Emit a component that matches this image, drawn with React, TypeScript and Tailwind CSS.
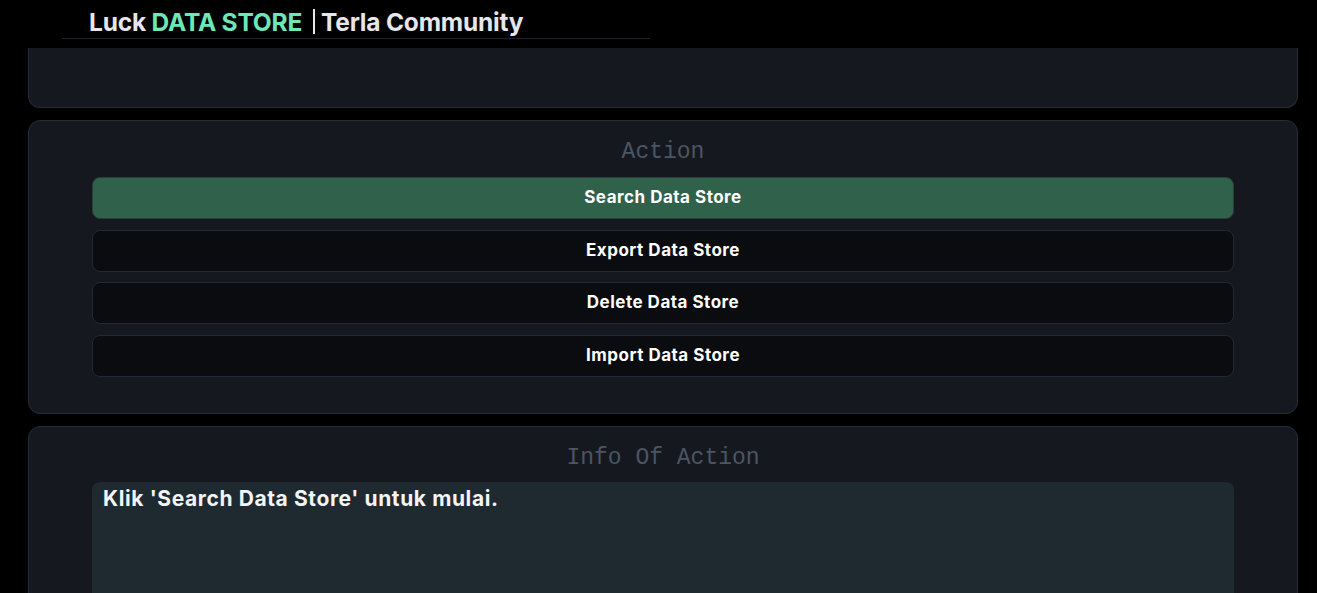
import { useState } from 'react'

const actions = [
  'Search Data Store',
  'Export Data Store',
  'Delete Data Store',
  'Import Data Store',
]

function Panel({ children, className = '' }: { children?: React.ReactNode; className?: string }) {
  return (
    <section className={`rounded-xl border border-[#272b37] bg-[#161820] ${className}`}>
      {children}
    </section>
  )
}

export default function App() {
  const [active, setActive] = useState(0)
  const [info, setInfo] = useState("Klik 'Search Data Store' untuk mulai.")

  return (
    <div className="relative h-screen overflow-hidden bg-black font-['Inter',sans-serif] text-white">
      {/* header bar */}
      <header className="fixed inset-x-0 top-0 z-10 h-12 bg-black">
        <div className="ml-[62px] w-[588px] border-b border-[#1e2130] pl-[27px] pt-[6px] pb-[1px]">
          <h1 className="text-[24.5px] font-bold leading-[30px] tracking-[-0.2px] text-[#e5e7eb]">
            Luck <span className="text-[#6ee7b7]">DATA STORE</span>
            <span className="ml-[11px] mr-[6px] inline-block h-[25px] w-[2px] translate-y-[3px] bg-[#e5e7eb]" />
            Terla Community
          </h1>
        </div>
      </header>

      <main className="ml-7 mr-[19px] flex flex-col gap-3">
        <Panel className="h-[108px] rounded-t-none border-t-0" />

        <Panel className="px-[63px] pt-4 pb-[36.5px]">
          <h2 className="mb-[10px] text-center font-['Liberation_Mono',monospace] text-[23px] leading-[30px] text-[#4b5563]">
            Action
          </h2>
          <div className="flex flex-col gap-[10.5px]">
            {actions.map((label, i) => (
              <button
                key={label}
                onClick={() => {
                  setActive(i)
                  setInfo(`Menjalankan '${label}'...`)
                }}
                className={`h-[42px] rounded-lg border text-[17px] font-bold tracking-[0.5px] ${
                  active === i
                    ? 'border-[#2c3d3a] bg-[#2f614b]'
                    : 'border-[#23273a] bg-[#0b0c10]'
                }`}
              >
                {label}
              </button>
            ))}
          </div>
        </Panel>

        <Panel className="h-[200px] px-[63px] pt-4">
          <h2 className="mb-[9px] text-center font-['Liberation_Mono',monospace] text-[23px] leading-[30px] text-[#4b5563]">
            Info Of Action
          </h2>
          <div className="h-[160px] rounded-lg bg-[#1e2a2f] px-[11px] py-[3px]">
            <p className="text-[21px] font-bold leading-[28px] tracking-[0.6px] text-[#f3f4f6]">{info}</p>
          </div>
        </Panel>
      </main>
    </div>
  )
}
